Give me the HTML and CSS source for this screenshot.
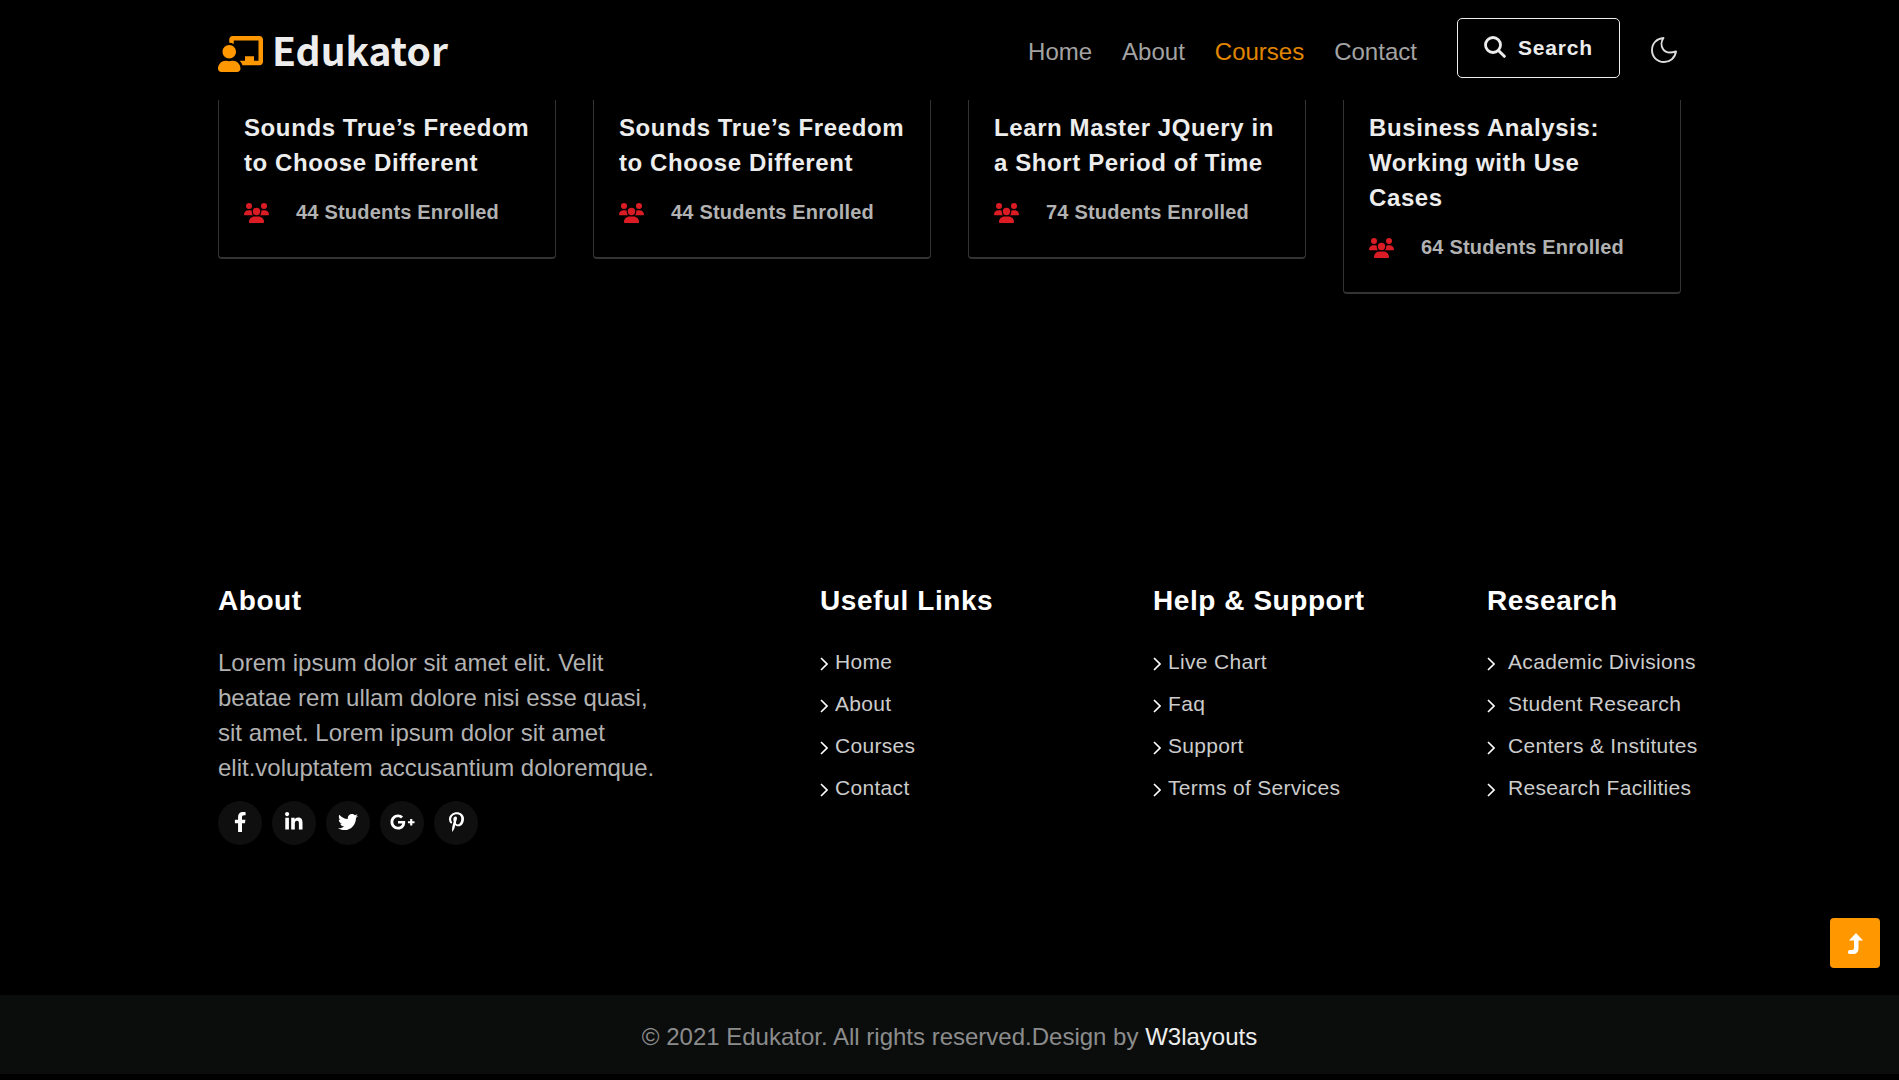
FILE: index.html
```html
<!DOCTYPE html>
<html lang="en">
<head>
<meta charset="utf-8">
<meta name="viewport" content="width=device-width, initial-scale=1">
<title>Edukator - Courses</title>
<link rel="stylesheet" href="styles.css">
</head>
<body>
<svg class="sprite" aria-hidden="true">
  <symbol id="users" viewBox="0 0 25 20">
    <circle cx="5" cy="3" r="3"/><circle cx="20" cy="3" r="3"/><circle cx="12.500" cy="8.500" r="3.700"/>
    <path d="M0 11.600C0 9 2 7.300 4.500 7.300h1.700c.6 0 1.100.2 1.600.4C7.500 9.500 8 11 9 12.300H.700C.3 12.300 0 12 0 11.600zM25 11.600C25 9 23 7.300 20.500 7.300h-1.700c-.6 0-1.100.2-1.600.4C17.500 9.500 17 11 16 12.300h8.300c.4 0 .7-.3.7-.7z"/>
    <path d="M5 19C5 15.800 7.500 13.500 10.400 13.500h4.200C17.500 13.500 20 15.800 20 19c0 .6-.4 1-1 1H6c-.6 0-1-.4-1-1z"/>
  </symbol>
  <symbol id="chevron" viewBox="0 0 8 14"><path d="M1 1l6 6-6 6" fill="none" stroke="currentColor" stroke-width="1.600"/></symbol>
</svg>

<header class="site-header">
  <div class="container header-row">
    <a class="logo" href="#">
      <svg class="logo-icon" viewBox="0 0 640 512" aria-hidden="true"><path d="M208 352c-2.390 0-4.780.35-7.060 1.090C187.980 357.300 174.350 360 160 360c-14.350 0-27.980-2.700-40.950-6.910-2.280-.74-4.660-1.090-7.050-1.090C49.940 352-.33 402.480 0 464.620.14 490.880 21.730 512 48 512h224c26.270 0 47.860-21.120 48-47.380.33-62.140-49.940-112.620-112-112.620zm-48-32c53.020 0 96-42.980 96-96s-42.980-96-96-96-96 42.980-96 96 42.980 96 96 96zM592 0H208c-26.470 0-48 22.250-48 49.590V96c23.420 0 45.100 6.780 64 17.800V64h352v288h-64v-64H384v64h-76.240c19.100 16.690 33.120 38.730 39.690 64H592c26.470 0 48-22.250 48-49.590V49.590C640 22.250 618.470 0 592 0z"/></svg>
      <span>Edukator</span>
    </a>
    <nav class="main-nav" aria-label="Main">
      <a href="#">Home</a>
      <a href="#">About</a>
      <a class="active" href="#">Courses</a>
      <a href="#">Contact</a>
    </nav>
    <button class="search-button" type="button">
      <svg viewBox="0 0 22 22" aria-hidden="true"><circle cx="9" cy="9" r="7.500" fill="none" stroke="currentColor" stroke-width="2.800"/><path d="M14.500 14.500l5.800 5.800" stroke="currentColor" stroke-width="3" stroke-linecap="round"/></svg>
      Search
    </button>
    <button class="theme-button" type="button" aria-label="Toggle dark mode">
      <svg viewBox="0 0 26 26" aria-hidden="true"><path d="M12.500 1C8 7 11 19 25 14.500 24 21 19 25 13 25 6 25 1 20 1 13 1 6 6 1.500 12.500 1z" fill="none" stroke="currentColor" stroke-width="1.900" stroke-linejoin="round"/></svg>
    </button>
  </div>
</header>

<main class="container courses">
  <article class="course">
    <h4>Sounds True’s Freedom to Choose Different</h4>
    <p class="enrolled"><svg aria-hidden="true"><use href="#users"/></svg>44 Students Enrolled</p>
  </article>
  <article class="course">
    <h4>Sounds True’s Freedom to Choose Different</h4>
    <p class="enrolled"><svg aria-hidden="true"><use href="#users"/></svg>44 Students Enrolled</p>
  </article>
  <article class="course">
    <h4>Learn Master JQuery in a Short Period of Time</h4>
    <p class="enrolled"><svg aria-hidden="true"><use href="#users"/></svg>74 Students Enrolled</p>
  </article>
  <article class="course">
    <h4>Business Analysis: Working with Use Cases</h4>
    <p class="enrolled"><svg aria-hidden="true"><use href="#users"/></svg>64 Students Enrolled</p>
  </article>
</main>

<footer>
  <div class="container footer-grid">
    <section class="about">
      <h3>About</h3>
      <p>Lorem ipsum dolor sit amet elit. Velit beatae rem ullam dolore nisi esse quasi, sit amet. Lorem ipsum dolor sit amet elit.voluptatem accusantium doloremque.</p>
      <div class="social">
        <a href="#" aria-label="Facebook"><svg viewBox="0 0 320 512"><path d="M279.140 288l14.220-92.660h-88.910v-60.130c0-25.350 12.420-50.060 52.240-50.060h40.420V6.260S260.430 0 225.360 0c-73.220 0-121.080 44.380-121.080 124.720v70.620H22.890V288h81.390v224h100.170V288z"/></svg></a>
        <a href="#" aria-label="LinkedIn"><svg viewBox="0 0 448 512"><path d="M100.280 448H7.400V148.900h92.880zM53.790 108.100C24.090 108.100 0 83.500 0 53.800a53.790 53.790 0 0 1 107.580 0c0 29.700-24.100 54.300-53.790 54.300zM447.900 448h-92.680V302.400c0-34.700-.7-79.200-48.290-79.200-48.290 0-55.690 37.700-55.690 76.700V448h-92.780V148.900h89.080v40.800h1.300c12.400-23.500 42.690-48.300 87.880-48.300 94 0 111.280 61.900 111.280 142.300V448z"/></svg></a>
        <a href="#" aria-label="Twitter"><svg viewBox="0 0 512 512"><path d="M459.370 151.716c.325 4.548.325 9.097.325 13.645 0 138.720-105.583 298.558-298.558 298.558-59.452 0-114.680-17.219-161.137-47.106 8.447.974 16.568 1.299 25.340 1.299 49.055 0 94.213-16.568 130.274-44.832-46.132-.975-84.792-31.188-98.112-72.772 6.498.974 12.995 1.624 19.818 1.624 9.421 0 18.843-1.300 27.614-3.573-48.081-9.747-84.143-51.980-84.143-102.985v-1.299c13.969 7.797 30.214 12.670 47.431 13.319-28.264-18.843-46.781-51.005-46.781-87.391 0-19.492 5.197-37.360 14.294-52.954 51.655 63.675 129.300 105.258 216.365 109.807-1.624-7.797-2.599-15.918-2.599-24.040 0-57.828 46.782-104.934 104.934-104.934 30.213 0 57.502 12.670 76.670 33.137 23.715-4.548 46.456-13.320 66.599-25.340-7.798 24.366-24.366 44.833-46.132 57.827 21.117-2.273 41.584-8.122 60.426-16.243-14.292 20.791-32.161 39.308-52.628 54.253z"/></svg></a>
        <a href="#" aria-label="Google Plus"><svg viewBox="0 0 640 512"><path d="M386.061 228.496c1.834 9.692 3.143 19.384 3.143 31.956C389.204 370.205 315.599 448 204.800 448c-106.084 0-192-85.915-192-192s85.916-192 192-192c51.864 0 95.083 18.859 128.611 50.292l-52.126 50.030c-14.145-13.621-39.028-29.599-76.485-29.599-65.484 0-118.920 54.221-118.920 121.277 0 67.056 53.436 121.277 118.920 121.277 75.961 0 104.513-54.745 108.965-82.773H204.800v-66.009h181.261zm185.406 6.437V179.200h-56.001v55.733h-55.733v56.001h55.733v55.733h56.001v-55.733H627.200v-56.001h-55.733z"/></svg></a>
        <a href="#" aria-label="Pinterest"><svg viewBox="0 0 384 512"><path d="M204 6.500C101.400 6.500 0 74.900 0 185.600 0 256 39.600 296 63.600 296c9.900 0 15.600-27.600 15.600-35.400 0-9.300-23.700-29.100-23.700-67.800 0-80.400 61.200-137.400 140.400-137.400 68.100 0 118.500 38.700 118.500 109.800 0 53.100-21.300 152.700-90.300 152.700-24.900 0-46.200-18-46.200-43.800 0-37.800 26.400-74.400 26.400-113.400 0-66.200-93.900-54.200-93.900 25.800 0 16.800 2.100 35.400 9.600 50.700-13.800 59.400-42 147.900-42 209.100 0 18.900 2.700 37.500 4.500 56.400 3.400 3.800 1.700 3.400 6.900 1.500 50.400-69 48.600-82.500 71.400-172.800 12.300 23.400 44.100 36 69.300 36 106.200 0 153.900-103.500 153.900-196.800C384 71.300 298.200 6.500 204 6.500z"/></svg></a>
      </div>
    </section>
    <section>
      <h3>Useful Links</h3>
      <ul class="links">
        <li><a href="#"><svg aria-hidden="true"><use href="#chevron"/></svg>Home</a></li>
        <li><a href="#"><svg aria-hidden="true"><use href="#chevron"/></svg>About</a></li>
        <li><a href="#"><svg aria-hidden="true"><use href="#chevron"/></svg>Courses</a></li>
        <li><a href="#"><svg aria-hidden="true"><use href="#chevron"/></svg>Contact</a></li>
      </ul>
    </section>
    <section>
      <h3>Help &amp; Support</h3>
      <ul class="links">
        <li><a href="#"><svg aria-hidden="true"><use href="#chevron"/></svg>Live Chart</a></li>
        <li><a href="#"><svg aria-hidden="true"><use href="#chevron"/></svg>Faq</a></li>
        <li><a href="#"><svg aria-hidden="true"><use href="#chevron"/></svg>Support</a></li>
        <li><a href="#"><svg aria-hidden="true"><use href="#chevron"/></svg>Terms of Services</a></li>
      </ul>
    </section>
    <section>
      <h3>Research</h3>
      <ul class="links spaced">
        <li><a href="#"><svg aria-hidden="true"><use href="#chevron"/></svg>Academic Divisions</a></li>
        <li><a href="#"><svg aria-hidden="true"><use href="#chevron"/></svg>Student Research</a></li>
        <li><a href="#"><svg aria-hidden="true"><use href="#chevron"/></svg>Centers &amp; Institutes</a></li>
        <li><a href="#"><svg aria-hidden="true"><use href="#chevron"/></svg>Research Facilities</a></li>
      </ul>
    </section>
  </div>
  <div class="copyright">
    <p>© 2021 Edukator. All rights reserved.Design by <a href="#">W3layouts</a></p>
  </div>
</footer>

<button class="to-top" type="button" aria-label="Back to top">
  <svg viewBox="0 0 15 21" aria-hidden="true"><path d="M8 0L15 7.500H10.500V15c0 4-2 6-5.500 6H1.500C.5 21 0 20.500 0 19.300s.5-2.300 1.500-2.300H4c1.300 0 2-.7 2-2V7.500H1z"/></svg>
</button>
</body>
</html>
```
FILE: styles.css
```css
* {
  box-sizing: border-box;
  margin: 0;
  padding: 0;
}

body {
  background: #000;
  color: #b2b2b2;
  font-family: "Liberation Sans", Arial, sans-serif;
  font-size: 24px;
  line-height: 35px;
}

a {
  color: inherit;
  text-decoration: none;
}

svg {
  display: block;
  flex: none;
  fill: currentColor;
}

button {
  font: inherit;
  cursor: pointer;
}

.sprite {
  position: absolute;
  width: 0;
  height: 0;
}

.container {
  width: 78%;
  max-width: 1463px;
  margin: 0 auto;
}

/* Header */
.header-row {
  display: flex;
  align-items: center;
  height: 100px;
}

.logo {
  display: flex;
  align-items: center;
  gap: 9px;
  margin-right: auto;
  color: #ededed;
  font-family: "Noto Sans CJK JP", "Noto Sans", sans-serif;
  font-size: 39px;
  font-weight: 700;
}

.logo span {
  padding-bottom: 2px;
}

.logo-icon {
  width: 45px;
  height: 36px;
  margin-top: 8px;
  color: #ff9800;
}

.main-nav {
  display: flex;
  gap: 30px;
  padding-top: 2px;
  color: #a3a3a3;
}

.main-nav .active {
  color: #e08600;
}

.search-button {
  display: flex;
  align-items: center;
  gap: 12px;
  height: 60px;
  margin-left: 40px;
  margin-bottom: 4px;
  padding: 0 26px 2px;
  border: 1px solid #ededed;
  border-radius: 5px;
  background: none;
  color: #ededed;
  font-size: 21px;
  font-weight: 700;
  letter-spacing: 0.04em;
}

.search-button svg {
  width: 22px;
  height: 22px;
}

.theme-button {
  margin-left: 31px;
  margin-right: 4px;
  border: 0;
  background: none;
  color: #ddd;
}

.theme-button svg {
  width: 26px;
  height: 26px;
}

/* Course cards */
.courses {
  display: grid;
  grid-template-columns: repeat(4, 1fr);
  align-items: start;
  gap: 37px;
  min-height: 483px;
}

.course {
  padding: 10px 25px 27px;
  border: 1px solid #333;
  border-width: 0 1px 2px;
  border-radius: 0 0 4px 4px;
}

.course h4 {
  color: #ededed;
  font-size: 24px;
  letter-spacing: 0.025em;
}

.enrolled {
  display: flex;
  align-items: center;
  gap: 27px;
  margin-top: 15px;
  font-size: 20px;
  font-weight: 700;
  letter-spacing: 0.01em;
}

.enrolled svg {
  width: 25px;
  height: 20px;
  color: #dc1c24;
}

/* Footer */
.footer-grid {
  display: grid;
  grid-template-columns: minmax(0, 602fr) minmax(0, 333fr) minmax(0, 334fr) minmax(0, 194fr);
  min-height: 412px;
}

.footer-grid h3 {
  margin-bottom: 26px;
  color: #fff;
  font-size: 28px;
  letter-spacing: 0.02em;
  white-space: nowrap;
}

.about p {
  max-width: 450px;
  padding-top: 1px;
}

.social {
  display: flex;
  gap: 10px;
  margin-top: 16px;
}

.social a {
  display: flex;
  align-items: center;
  justify-content: center;
  width: 44px;
  height: 44px;
  padding-bottom: 2px;
  border-radius: 50%;
  background: #0f0f0f;
  color: #fff;
}

.social svg {
  height: 20px;
}

.links {
  display: grid;
  gap: 7px;
  list-style: none;
  color: #ccc;
  font-size: 21px;
  letter-spacing: 0.015em;
}

.links a {
  display: flex;
  align-items: center;
  gap: 7px;
  white-space: nowrap;
}

.links.spaced a {
  gap: 13px;
}

.links svg {
  width: 8px;
  height: 14px;
  margin-top: 4px;
  color: #fff;
}

.copyright {
  padding: 24px 0 20px;
  border-bottom: 1px solid #000;
  background: #0b0d0c;
  color: #8c8c8c;
  text-align: center;
}

.copyright a {
  color: #ededed;
}

.to-top {
  position: fixed;
  right: 19px;
  bottom: 112px;
  display: flex;
  align-items: center;
  justify-content: center;
  width: 50px;
  height: 50px;
  border: 0;
  border-radius: 4px;
  background: #ff9800;
  color: #fff;
}

.to-top svg {
  width: 15px;
  height: 21px;
}
```
